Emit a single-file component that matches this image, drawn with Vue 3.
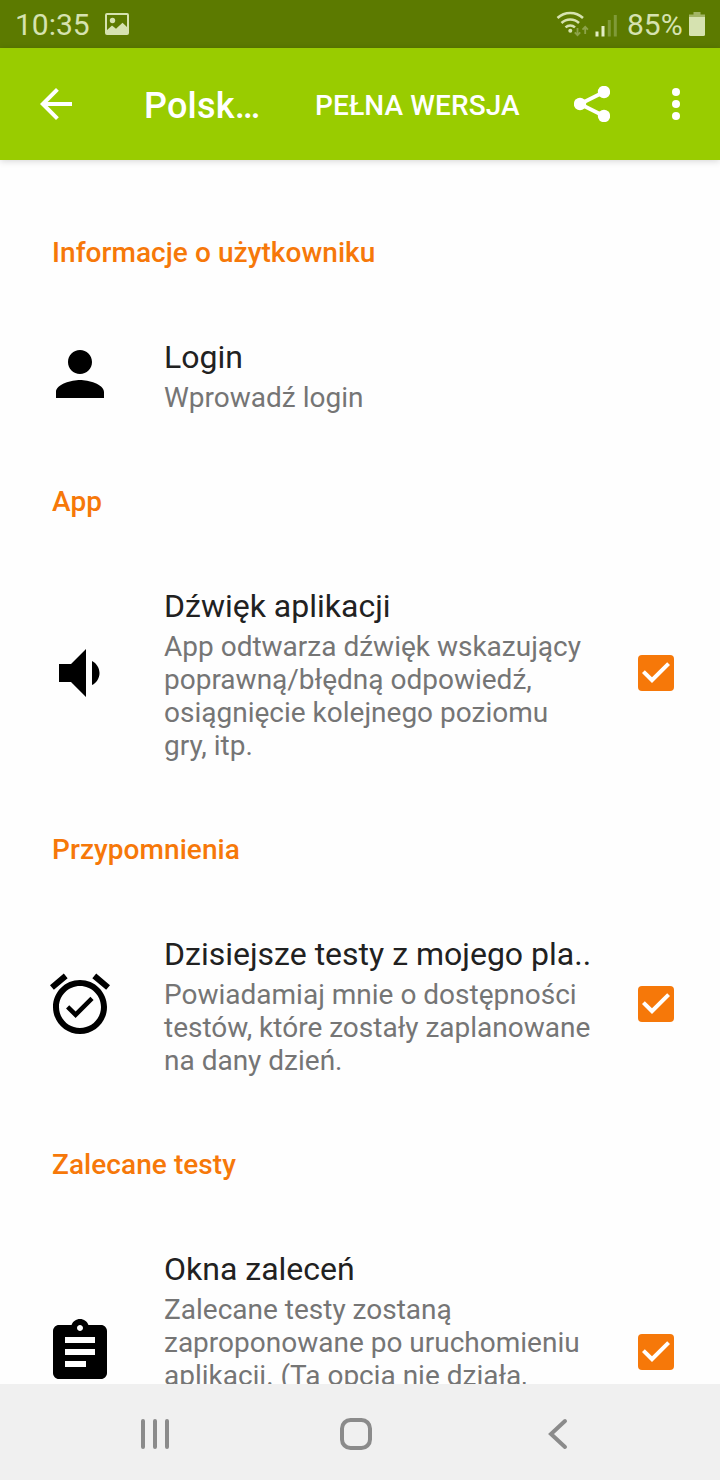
<template>
  <div class="screen">
    <!-- Status bar -->
    <div class="status-bar">
      <span class="status-time">10:35</span>
      <svg class="status-image" viewBox="0 0 24 22">
        <path fill-rule="evenodd" d="M2 0h20a2 2 0 0 1 2 2v18a2 2 0 0 1-2 2H2a2 2 0 0 1-2-2V2a2 2 0 0 1 2-2zM2 2v15l5-4.500 4 3.200 6.500-6 4.500 4.300V2z" />
        <circle cx="7.500" cy="7.500" r="2.700" />
      </svg>
      <div class="status-right">
        <svg class="status-network" viewBox="0 0 62 26">
          <g fill="none" stroke="#d6e2b0" stroke-width="2.500">
            <path d="M1.500 7a18.500 18.500 0 0 1 25.500 0" />
            <path d="M5.500 12a12.500 12.500 0 0 1 17.500 0" />
            <path d="M9.500 16.300a7 7 0 0 1 9.500 0" />
          </g>
          <circle cx="14.300" cy="19.800" r="2" fill="#d6e2b0" />
          <g fill="none" stroke="#8da34a" stroke-width="1.800">
            <path d="M21.500 17v7M18.800 21.300l2.700 2.900 2.700-2.900" />
            <path d="M29.200 23v-7M26.500 18.700l2.700-2.900 2.700 2.900" />
          </g>
          <path d="M39.500 20.500h3v5h-3zM45.500 15h3v10.500h-3z" fill="#e3edc4" />
          <path d="M51.800 9h3v16.500h-3zM57.800 4h3v21.500h-3z" fill="#809a38" />
        </svg>
        <span class="status-percent">85%</span>
        <svg class="status-battery" viewBox="0 0 16 24">
          <path d="M4.500 0h7v2.500H16V5H0V2.500h4.500z" fill="#a2b565" />
          <path d="M0 5h16v17.500a1.500 1.500 0 0 1-1.500 1.500h-13A1.500 1.500 0 0 1 0 22.500z" fill="#d6e2b0" />
        </svg>
      </div>
    </div>

    <!-- Toolbar -->
    <header class="toolbar">
      <svg class="icon-back" viewBox="0 0 24 24">
        <path d="M20 11H7.830l5.590-5.590L12 4l-8 8 8 8 1.410-1.410L7.830 13H20v-2z" />
      </svg>
      <h1 class="toolbar-title">Polsk…</h1>
      <span class="toolbar-action">PEŁNA WERSJA</span>
      <svg class="icon-share" viewBox="0 0 36 36">
        <path d="M30 6L6 18l24 12" fill="none" stroke="#fff" stroke-width="3.800" />
        <circle cx="30" cy="6" r="6.200" />
        <circle cx="6" cy="18" r="6.200" />
        <circle cx="30" cy="30" r="6.200" />
      </svg>
      <svg class="icon-more" viewBox="0 0 24 24">
        <circle cx="12" cy="6" r="2" />
        <circle cx="12" cy="12" r="2" />
        <circle cx="12" cy="18" r="2" />
      </svg>
    </header>

    <!-- Preferences -->
    <main class="settings">
      <section v-for="section in sections" :key="section.category">
        <h2 class="category">{{ section.category }}</h2>
        <div class="preference">
          <div class="preference-icon">
            <svg viewBox="0 0 24 24"><path :d="section.icon" /></svg>
          </div>
          <div class="preference-text" :class="{ 'preference-text--long': section.long }">
            <div class="preference-title">{{ section.title }}</div>
            <div class="preference-summary">{{ section.summary.join('\n') }}</div>
          </div>
          <button
            v-if="section.checkable"
            class="checkbox"
            :class="{ 'checkbox--checked': section.checked }"
            @click="section.checked = !section.checked"
          >
            <svg v-if="section.checked" viewBox="3 3 18 18">
              <path d="M10 17l-5-5 1.410-1.410L10 14.170l7.590-7.590L19 8l-9 9z" />
            </svg>
          </button>
        </div>
      </section>
    </main>

    <!-- System navigation -->
    <nav class="nav-bar">
      <svg viewBox="0 0 36 36"><path d="M5 5v26M17 5v26M29 5v26" /></svg>
      <svg class="nav-home" viewBox="0 0 36 36"><rect x="4" y="4" width="28" height="28" rx="8.500" /></svg>
      <svg viewBox="0 0 36 36"><path d="M25 5L11 18l14 13" /></svg>
    </nav>
  </div>
</template>

<script setup>
import { ref } from 'vue'

const sections = ref([
  {
    category: 'Informacje o użytkowniku',
    title: 'Login',
    summary: ['Wprowadź login'],
    icon: 'M12 12c2.210 0 4-1.790 4-4s-1.790-4-4-4-4 1.790-4 4 1.790 4 4 4zm0 2c-2.670 0-8 1.340-8 4v2h16v-2c0-2.660-5.330-4-8-4z'
  },
  {
    category: 'App',
    title: 'Dźwięk aplikacji',
    summary: [
      'App odtwarza dźwięk wskazujący',
      'poprawną/błędną odpowiedź,',
      'osiągnięcie kolejnego poziomu',
      'gry, itp.'
    ],
    icon: 'M18.500 12c0-1.770-1.020-3.290-2.500-4.030v8.050c1.480-.730 2.500-2.250 2.500-4.020zM5 9v6h4l5 5V4L9 9H5z',
    checkable: true,
    checked: true
  },
  {
    category: 'Przypomnienia',
    title: 'Dzisiejsze testy z mojego pla..',
    summary: [
      'Powiadamiaj mnie o dostępności',
      'testów, które zostały zaplanowane',
      'na dany dzień.'
    ],
    icon: 'M22 5.720l-4.600-3.860-1.290 1.530 4.600 3.860L22 5.720zM7.880 3.390L6.600 1.860 2 5.710l1.290 1.530 4.590-3.850zM12 4c-4.970 0-9 4.030-9 9s4.020 9 9 9c4.970 0 9-4.030 9-9s-4.030-9-9-9zm0 16c-3.870 0-7-3.130-7-7s3.130-7 7-7 7 3.130 7 7-3.130 7-7 7zm-1.460-5.470L8.410 12.400l-1.060 1.060 3.180 3.180 6-6-1.060-1.060-4.930 4.950z',
    checkable: true,
    checked: true
  },
  {
    category: 'Zalecane testy',
    title: 'Okna zaleceń',
    summary: [
      'Zalecane testy zostaną',
      'zaproponowane po uruchomieniu',
      'aplikacji. (Ta opcja nie działa,'
    ],
    long: true,
    icon: 'M19 3h-4.180C14.400 1.840 13.300 1 12 1c-1.300 0-2.400.840-2.820 2H5c-1.100 0-2 .9-2 2v14c0 1.100.9 2 2 2h14c1.100 0 2-.9 2-2V5c0-1.100-.9-2-2-2zm-7 0c.550 0 1 .450 1 1s-.450 1-1 1-1-.450-1-1 .450-1 1-1zm2 14H7v-2h7v2zm3-4H7v-2h10v2zm0-4H7V7h10v2z',
    checkable: true,
    checked: true
  }
])
</script>

<style>
body {
  margin: 0;
}
</style>

<style scoped>
.screen {
  width: 720px;
  height: 1480px;
  display: flex;
  flex-direction: column;
  overflow: hidden;
  background: #fefefe;
  font-family: Roboto, 'Noto Sans', sans-serif;
}

/* Status bar */
.status-bar {
  height: 48px;
  flex-shrink: 0;
  display: flex;
  align-items: center;
  padding: 0 15px;
  box-sizing: border-box;
  background: #5c7a00;
  color: #d6e2b0;
  font-size: 30px;
}

.status-time {
  width: 75px;
  padding-top: 1px;
  line-height: 48px;
  white-space: nowrap;
}

.status-image {
  width: 24px;
  height: 22px;
  margin-left: 15px;
  fill: #d6e2b0;
}

.status-right {
  display: flex;
  align-items: center;
  margin-left: auto;
}

.status-network {
  width: 62px;
  height: 26px;
  margin-top: -1px;
}

.status-percent {
  margin-left: 9px;
  width: 57px;
  white-space: nowrap;
}

.status-battery {
  width: 16px;
  height: 24px;
  margin-left: 5px;
}

/* Toolbar */
.toolbar {
  height: 112px;
  flex-shrink: 0;
  display: flex;
  align-items: center;
  padding: 0 20px 0 32px;
  box-sizing: border-box;
  background: #99cc00;
  color: #fff;
  box-shadow: 0 1px 7px rgba(0, 0, 0, 0.17);
}

.toolbar svg {
  flex-shrink: 0;
  fill: #fff;
}

.icon-back,
.icon-more {
  width: 48px;
  height: 48px;
}

.toolbar-title {
  width: 171px;
  margin: 4px 0 0 64px;
  font-size: 36px;
  font-weight: 500;
  letter-spacing: 0.2px;
  white-space: nowrap;
}

.toolbar-action {
  margin-top: 2px;
  font-size: 28px;
  font-weight: 500;
  letter-spacing: 0.1px;
  white-space: nowrap;
}

.icon-share {
  width: 36px;
  height: 36px;
  margin: 0 42px 0 auto;
}

/* Preferences */
.settings {
  flex: 1;
  min-height: 0;
  overflow: hidden;
  padding-top: 38px;
}

.category {
  margin: 0;
  padding: 38px 52px 0;
  height: 68px;
  line-height: 33px;
  font-size: 28px;
  font-weight: 500;
  letter-spacing: 0.06px;
  color: #f67809;
}

.preference {
  display: flex;
  align-items: center;
  padding: 31px 46px 33px 44px;
}

.preference-icon {
  width: 120px;
  flex-shrink: 0;
  margin-bottom: 1px;
}

.preference-icon svg {
  display: block;
  width: 72px;
  height: 72px;
}

.preference-text {
  flex: 1;
  min-width: 0;
  white-space: pre;
}

.preference-text--long {
  min-height: 211px;
}

.preference-title {
  height: 46px;
  line-height: 44px;
  font-size: 32px;
  color: #212121;
}

.preference-summary {
  line-height: 33px;
  font-size: 28px;
  color: #757575;
}

.checkbox {
  width: 36px;
  height: 36px;
  flex-shrink: 0;
  margin: 0 0 1px;
  padding: 0;
  box-sizing: border-box;
  border: 4px solid #757575;
  border-radius: 4px;
  background: none;
}

.checkbox--checked {
  border: none;
  background: #f67809;
}

.checkbox svg {
  display: block;
  fill: #fff;
}

/* System navigation */
.nav-bar {
  height: 96px;
  flex-shrink: 0;
  display: flex;
  align-items: center;
  justify-content: space-between;
  padding: 4px 144px 0 138px;
  box-sizing: border-box;
  background: #f0f0f0;
}

.nav-bar svg {
  width: 36px;
  height: 36px;
  fill: none;
  stroke: #8b8b8b;
  stroke-width: 4;
  stroke-linecap: round;
}

.nav-home {
  margin-right: 3px;
}
</style>
